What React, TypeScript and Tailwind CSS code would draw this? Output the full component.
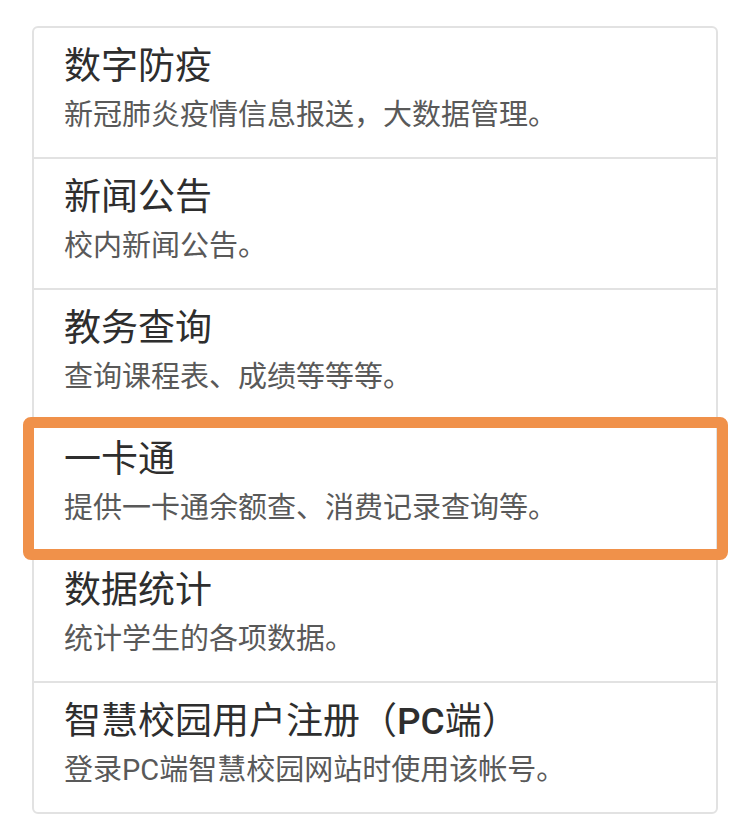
import React from "react";

type Item = {
  title: React.ReactNode;
  desc: string;
  highlight?: boolean;
};

const items: Item[] = [
  { title: "数字防疫", desc: "新冠肺炎疫情信息报送，大数据管理。" },
  { title: "新闻公告", desc: "校内新闻公告。" },
  { title: "教务查询", desc: "查询课程表、成绩等等等。" },
  { title: "一卡通", desc: "提供一卡通余额查、消费记录查询等。", highlight: true },
  { title: "数据统计", desc: "统计学生的各项数据。" },
  {
    title: (
      <>
        智慧校园用户注册（<span className="font-medium">PC</span>端）
      </>
    ),
    desc: "登录PC端智慧校园网站时使用该帐号。",
  },
];

export default function App() {
  return (
    <div className="min-h-screen bg-white pt-[26px] font-['Roboto','Noto_Sans_CJK_SC',sans-serif]">
      {/* list card */}
      <div className="ml-[32px] w-[686px] rounded-md border-2 border-[#e2e2e2] bg-white">
        {items.map((item, i) => (
          <div
            key={i}
            className={`relative px-[30px] pt-[17px] pb-[20px] ${i > 0 ? "border-t-2 border-[#e2e2e2]" : ""}`}
          >
            <div className="text-[37px] leading-[44px] text-[#2e2e2e]">{item.title}</div>
            <div className="mt-[4px] text-[29px] leading-[44px] text-[#595959]">{item.desc}</div>

            {/* orange annotation box */}
            {item.highlight && (
              <div className="pointer-events-none absolute z-10 top-[-4px] bottom-[-10px] left-[-11px] right-[-12px] rounded-[8px] border-[11px] border-[#f0914a]" />
            )}
          </div>
        ))}
      </div>
    </div>
  );
}
